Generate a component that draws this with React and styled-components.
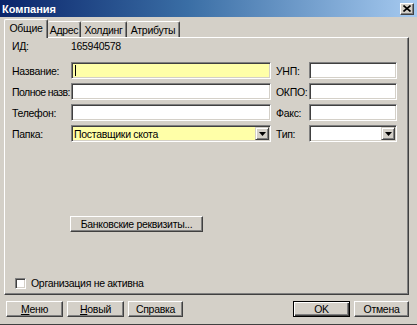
import React from 'react'
import styled, { createGlobalStyle } from 'styled-components'

const GlobalStyle = createGlobalStyle`
body {
  margin: 0;
  font-family: 'Liberation Sans', Tahoma, Arial, sans-serif;
  font-size: 10.5px;
  letter-spacing: -0.3px;
  color: #000;
  background: #d4d0c8;
}
`

const Window = styled.div`
width: 417px;
height: 325px;
box-sizing: border-box;
background: #d4d0c8;
display: flex;
flex-direction: column;
overflow: hidden;
border-bottom: 1px solid #404040;
`

const TitleBar = styled.div`
height: 17px;
flex: none;
display: flex;
align-items: center;
justify-content: space-between;
padding: 0 3px 0 2px;
background: linear-gradient(to right, #0a246a 0%, #3a6ea5 45%, #a6caf0 100%);
`

const Title = styled.span`
color: #fff;
font-weight: bold;
font-size: 11px;
letter-spacing: 0;
`

const CloseButton = styled.div`
width: 14px;
height: 12px;
box-sizing: border-box;
background: #d4d0c8;
border: 1px solid;
border-color: #fff #404040 #404040 #fff;
box-shadow: inset -1px -1px #808080;
display: flex;
align-items: center;
justify-content: center;
`

const TabStrip = styled.div`
display: flex;
align-items: flex-end;
height: 19px;
margin: 2px 0 -1px 4px;
position: relative;
z-index: 1;
`

const Tab = styled.div`
width: ${p => p.$w}px;
height: ${p => (p.$active ? 19 : 16)}px;
margin-bottom: ${p => (p.$active ? 0 : 1)}px;
box-sizing: border-box;
display: flex;
align-items: center;
justify-content: center;
padding-bottom: ${p => (p.$active ? 2 : 0)}px;
background: #d4d0c8;
border-top: 1px solid #fff;
border-left: ${p => (p.$first || p.$active ? '1px solid #fff' : 'none')};
border-right: 1px solid #404040;
box-shadow: inset -1px 0 #808080;
border-radius: 2px 2px 0 0;
white-space: nowrap;
`

const Panel = styled.div`
margin: 0 8px 0 4px;
height: 258px;
box-sizing: border-box;
border: 1px solid;
border-color: #fff #404040 #404040 #fff;
box-shadow: inset -1px -1px #808080;
display: flex;
flex-direction: column;
padding: 1px 7px 5px 7px;
`

const FieldGrid = styled.div`
display: grid;
grid-template-columns: 59px 200px 38px 88px;
grid-template-rows: 19px repeat(4, 17px);
row-gap: 4px;
align-items: center;
`

const Label = styled.span`
white-space: nowrap;
letter-spacing: ${p => (p.$tight ? '-0.55px' : 'inherit')};
padding-left: ${p => (p.$right ? 5 : 0)}px;
align-self: ${p => (p.$top ? 'start' : 'center')};
line-height: ${p => (p.$top ? '14px' : 'normal')};
`

const Input = styled.div`
height: 17px;
box-sizing: border-box;
background: ${p => p.$bg || '#fff'};
border: 1px solid;
border-color: #808080 #fff #fff #808080;
box-shadow: inset 1px 1px #404040, inset -1px -1px #d4d0c8;
display: flex;
align-items: center;
padding: 0 2px 0 2px;
`

const Caret = styled.span`
width: 1px;
height: 11px;
background: #000;
margin-left: 1px;
`

const ComboText = styled.span`
flex: 1;
white-space: nowrap;
`

const DropButton = styled.div`
width: 14px;
height: 13px;
box-sizing: border-box;
background: #d4d0c8;
border: 1px solid;
border-color: #d4d0c8 #404040 #404040 #d4d0c8;
box-shadow: inset 1px 1px #fff, inset -1px -1px #808080;
display: flex;
align-items: center;
justify-content: center;
margin-right: -1px;
`

const Button = styled.div`
width: ${p => p.$w}px;
height: 16px;
box-sizing: border-box;
display: flex;
align-items: center;
justify-content: center;
background: #d4d0c8;
border: 1px solid;
border-color: ${p => (p.$default ? '#000' : '#fff #404040 #404040 #fff')};
box-shadow: ${p =>
    p.$default
      ? 'inset 1px 1px #fff, inset -1px -1px #404040, inset -2px -2px #808080'
      : 'inset -1px -1px #808080'};
white-space: nowrap;
`

const BankButton = styled(Button)`
margin: 74px 0 0 58px;
`

const CheckRow = styled.div`
margin-top: auto;
display: flex;
align-items: center;
gap: 5px;
padding-left: 3px;
`

const CheckBox = styled.div`
width: 11px;
height: 11px;
box-sizing: border-box;
background: #fff;
border: 1px solid;
border-color: #808080 #fff #fff #808080;
box-shadow: inset 1px 1px #404040, inset -1px -1px #d4d0c8;
`

const Footer = styled.div`
display: flex;
align-items: center;
padding: 0 8px 0 6px;
margin-top: 6px;
gap: 4px;
`

const Spacer = styled.div`
flex: 1;
`

const Key = styled.span`
text-decoration: underline;
`

const Arrow = () => (
  <svg width="7" height="4" viewBox="0 0 7 4">
    <path d="M0 0h7L3.5 4z" fill="#000" />
  </svg>
)

const Cross = () => (
  <svg width="8" height="7" viewBox="0 0 8 7">
    <path d="M0.5 0.5l7 6M7.5 0.5l-7 6" stroke="#000" strokeWidth="1.6" />
  </svg>
)

const App = () => {
  return (
    <Window>
      <GlobalStyle />
      <TitleBar>
        <Title>Компания</Title>
        <CloseButton>
          <Cross />
        </CloseButton>
      </TitleBar>
      <TabStrip>
        <Tab $w={44} $active $first>Общие</Tab>
        <Tab $w={33}>Адрес</Tab>
        <Tab $w={46}>Холдинг</Tab>
        <Tab $w={53}>Атрибуты</Tab>
      </TabStrip>
      <Panel>
        <FieldGrid>
          <Label $top>ИД:</Label>
          <Label $top>165940578</Label>
          <span />
          <span />

          <Label>Название:</Label>
          <Input $bg="#ffffa8">
            <Caret />
          </Input>
          <Label $right>УНП:</Label>
          <Input />

          <Label $tight>Полное назв:</Label>
          <Input />
          <Label $right>ОКПО:</Label>
          <Input />

          <Label>Телефон:</Label>
          <Input />
          <Label $right>Факс:</Label>
          <Input />

          <Label>Папка:</Label>
          <Input $bg="#ffffa8">
            <ComboText>Поставщики скота</ComboText>
            <DropButton>
              <Arrow />
            </DropButton>
          </Input>
          <Label $right>Тип:</Label>
          <Input>
            <ComboText />
            <DropButton>
              <Arrow />
            </DropButton>
          </Input>
        </FieldGrid>
        <BankButton $w={133}>Банковские реквизиты...</BankButton>
        <CheckRow>
          <CheckBox />
          <span>Организация не активна</span>
        </CheckRow>
      </Panel>
      <Footer>
        <Button $w={57}><span><Key>М</Key>еню</span></Button>
        <Button $w={57}><span><Key>Н</Key>овый</span></Button>
        <Button $w={55}>Справка</Button>
        <Spacer />
        <Button $w={57} $default>OK</Button>
        <Button $w={55}>Отмена</Button>
      </Footer>
    </Window>
  )
}

export default App
